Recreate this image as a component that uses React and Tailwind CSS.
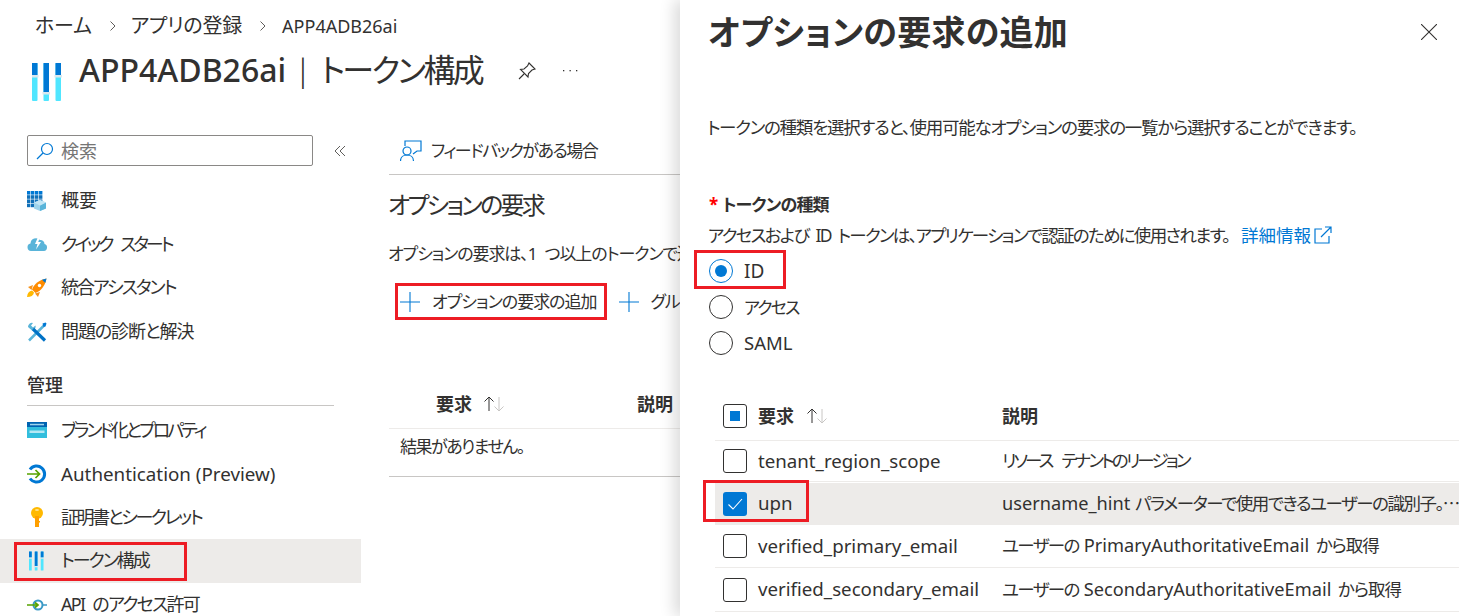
const FONT = "[font-family:'Noto_Sans','Noto_Sans_CJK_JP',sans-serif] [font-feature-settings:'palt']";

const BarsIcon = ({ className }) => (
	<svg className={className} viewBox="0 0 30 38">
		<rect x="0" y="0" width="5.5" height="38" rx="1" fill="#50e6ff" />
		<rect x="11.5" y="0" width="5.5" height="38" rx="1" fill="#50e6ff" />
		<rect x="23.5" y="0" width="5.5" height="38" rx="1" fill="#50e6ff" />
		<rect x="0" y="0" width="5.5" height="12" fill="#0078d4" />
		<rect x="11.5" y="0" width="5.5" height="29" fill="#0078d4" />
		<rect x="23.5" y="0" width="5.5" height="12" fill="#0078d4" />
		<rect x="-1" y="12" width="7.5" height="2.5" fill="#d9e8ee" />
		<rect x="10.5" y="29" width="7.5" height="2.5" fill="#d9e8ee" />
		<rect x="22.5" y="12" width="7.5" height="2.5" fill="#d9e8ee" />
	</svg>
);

const GridIcon = () => (
	<svg className="w-5 h-5" viewBox="0 0 20 20">
		{[0, 1, 2].map((r) =>
			[0, 1, 2, 3].map((c) => (
				<rect key={`${r}-${c}`} x={c * 4} y={r * 4.2} width="3.4" height="3.6" fill={r === 0 ? "#0078d4" : "#1170b8"} />
			)),
		)}
		<rect x="0" y="12.6" width="3.4" height="3.6" fill="#1170b8" />
		<rect x="4" y="12.6" width="3.4" height="3.6" fill="#1170b8" />
		<path d="M13 9l6 2.5v6L13 20l-6-2.500v-6z" fill="#9fd4ec" />
		<path d="M13 14.500l6-3v6L13 20z" fill="#59b4d9" />
		<path d="M7 11.500l6-2.500 6 2.500-6 3z" fill="#c3e6f5" />
	</svg>
);

const CloudIcon = () => (
	<svg className="w-[21px] h-5" viewBox="0 0 21 20">
		<path d="M4 17a3.800 3.800 0 0 1-.5-7.500A5.500 5.500 0 0 1 13 6a4 4 0 0 1 4.500 4A3.600 3.600 0 0 1 17 17z" fill="#59b4d9" />
		<path d="M11.500 2L8 10h2.500L9 15.500 14 8h-2.800L13.500 2z" fill="#fff" />
	</svg>
);

const RocketIcon = () => (
	<svg className="w-5 h-5" viewBox="0 0 20 20">
		<path d="M0 19c.5-4 2-6 5-6.500l2 2c-.500 3-3 4.500-7 4.500z" fill="#ffb900" />
		<path d="M1 9l5-2-1.500 5zM11 19l2-5-5 1.500z" fill="#f7941d" />
		<path d="M5 11.500C7 6 12 2 19.500.500 18 8 14 13 8.500 15z" fill="#ff8c00" />
		<path d="M15 1.700L19.500.500 18.300 5z" fill="#0078d4" />
		<circle cx="12.500" cy="7.500" r="1.700" fill="#fff" />
	</svg>
);

const ToolsIcon = () => (
	<svg className="w-5 h-5" viewBox="0 0 20 20">
		<path d="M2 18.500L17 3.500" stroke="#59b4d9" strokeWidth="2.500" />
		<path d="M15.500 1.500l3-1 1 1-1 3-2 .5z" fill="#0078d4" />
		<path d="M1 5a4 4 0 0 1 5-4L4 3.500l2 2L8.500 3.500a4 4 0 0 1-3.500 5z" fill="#59b4d9" />
		<path d="M6 7L18 18.500" stroke="#0072c6" strokeWidth="3.200" />
	</svg>
);

const WwwIcon = () => (
	<svg className="w-5 h-4" viewBox="0 0 20 16">
		<rect width="20" height="16" fill="#32bedd" />
		<rect width="20" height="5" fill="#0063b1" />
		<rect x="3" y="1.800" width="14" height="1.500" fill="#9fd4ec" />
		<path d="M2.500 8.500h15v2.500h-15z" fill="#d6f2fa" opacity=".8" />
	</svg>
);

const AuthIcon = () => (
	<svg className="w-5 h-5" viewBox="0 0 20 20" fill="none">
		<path d="M3 5.500A8 8 0 1 1 3 14.500" stroke="#0078d4" strokeWidth="3" />
		<path d="M0 10h12M8.500 6l4 4-4 4" stroke="#57a300" strokeWidth="1.700" />
	</svg>
);

const KeyIcon = () => (
	<svg className="w-5 h-5" viewBox="0 0 20 20">
		<circle cx="10" cy="6" r="6" fill="#ffb900" />
		<rect x="8" y="9" width="4" height="11" fill="#ff9f00" />
		<rect x="11" y="14" width="2" height="1.500" fill="#ff9f00" />
		<ellipse cx="10" cy="3" rx="2" ry="1" fill="#ffe28a" />
	</svg>
);

const ApiIcon = () => (
	<svg className="w-5 h-5" viewBox="0 0 20 20" fill="none">
		<circle cx="11" cy="10" r="4.500" stroke="#3999c6" strokeWidth="2" />
		<path d="M15 10h5" stroke="#3999c6" strokeWidth="1.500" />
		<path d="M0 10h11M8 7.500l3 2.500-3 2.500" stroke="#57a300" strokeWidth="1.700" />
	</svg>
);

const PlusIcon = () => (
	<svg className="w-5 h-5 shrink-0" viewBox="0 0 20 20" stroke="#0078d4" strokeWidth="1.100">
		<path d="M10 0v20M0 10h20" />
	</svg>
);

const SortArrows = () => (
	<svg className="w-[24px] h-[18px]" viewBox="0 0 24 18" fill="none" strokeWidth="1">
		<path d="M7 16V2M2.500 6.500L7 2l4.500 4.500" stroke="#323130" />
		<path d="M17 2v14M12.500 11.500L17 16l4.500-4.500" stroke="#c8c6c4" />
	</svg>
);

const Checkbox = ({ state }) => {
	if (state === "checked") {
		return (
			<span className="flex w-6 h-6 shrink-0 items-center justify-center rounded-[3px] bg-[#0078d4]">
				<svg className="w-4 h-4" viewBox="0 0 16 16" fill="none" stroke="#fff" strokeWidth="1.100">
					<path d="M1.500 8.500l4.500 4.500 9-10" />
				</svg>
			</span>
		);
	}
	return (
		<span className="flex w-6 h-6 shrink-0 items-center justify-center rounded-[3px] border border-[#323130] bg-white">
			{state === "mixed" && <span className="w-[10px] h-[10px] bg-[#0078d4]" />}
		</span>
	);
};

const Radio = ({ label, checked, className = "", labelClass }) => (
	<div className={`flex items-center h-[36px] ${className}`}>
		<span className={`flex w-6 h-6 items-center justify-center rounded-full border ${checked ? "border-[#0078d4]" : "border-[#323130]"}`}>
			{checked && <span className="w-3 h-3 rounded-full bg-[#0078d4]" />}
		</span>
		<span className={`ml-[11px] leading-none ${labelClass}`}>{label}</span>
	</div>
);

const NavItem = ({ icon, label, active, labelClass = "text-[18px]" }) => (
	<div className={`flex items-center h-[43.6px] pl-[27px] ${active ? "bg-[#edebe9]" : ""}`}>
		<span className="flex w-[34px] shrink-0 items-center">{icon}</span>
		<span className={`whitespace-nowrap ${labelClass}`}>{label}</span>
	</div>
);

const Row = ({ name, checked, className = "", children }) => (
	<div className={`flex items-center border-b border-[#edebe9] pl-2 ${className}`}>
		<Checkbox state={checked ? "checked" : "none"} />
		<span className="ml-[11px] w-[244px] shrink-0 text-[18.700px] whitespace-nowrap">{name}</span>
		<span className="overflow-hidden min-w-0 flex-1 text-[18.200px] whitespace-nowrap">{children}</span>
	</div>
);

const App = () => {
	return (
		<div className={`${FONT} relative flex w-[1459px] h-[616px] overflow-hidden bg-white text-[#323130]`}>
			<div className="flex flex-col w-[680px] shrink-0">
				<div className="flex items-center h-[52px] pl-[35px] text-[20px]">
					<span className="tracking-[-0.2px]">ホーム</span>
					<svg className="w-2 h-[10px] ml-[17px] mr-[14px]" viewBox="0 0 8 10" fill="none" stroke="#605e5c"><path d="M1.500 .5L6 5 1.500 9.500" /></svg>
					<span className="tracking-[-0.2px]">アプリの登録</span>
					<svg className="w-2 h-[10px] ml-[17px] mr-[15px]" viewBox="0 0 8 10" fill="none" stroke="#605e5c"><path d="M1.500 .5L6 5 1.500 9.500" /></svg>
					<span className="text-[18px]">APP4ADB26ai</span>
				</div>
				<div className="flex items-start h-[76px] pl-[32px]">
					<BarsIcon className="w-[30px] h-[38px] mt-[11px]" />
					<h1 className="flex ml-[17px] h-9 text-[32px] leading-9 whitespace-nowrap">
						<span className="font-medium">APP4ADB26ai</span>
						<span className="ml-[8px] font-light">|</span>
						<span className="ml-[9px] tracking-[-2.600px]">トークン構成</span>
					</h1>
					<svg className="w-5 h-5 ml-[35px] mt-[9px]" viewBox="0 0 20 20" fill="none" stroke="#323130" strokeWidth="1.100">
						<path d="M12 2l6 6-3 1-3.500 3.500-.5 3.500-7.500-7.500 3.500-.5L10.500 5zM7 13l-5 5" />
					</svg>
					<svg className="w-4 h-[2px] ml-[25px] mt-[18px]" viewBox="0 0 16 2" fill="#323130">
						<rect x="1" width="1.300" height="1.300" /><rect x="7.500" width="1.300" height="1.300" /><rect x="14" width="1.300" height="1.300" />
					</svg>
				</div>
				<div className="flex flex-1 min-h-0">
					<div className="w-[361px] shrink-0">
						<div className="flex items-center mt-[7px] pl-[27px]">
							<div className="flex items-center w-[286px] h-[31px] rounded-[2px] border border-[#8a8886] pl-2">
								<svg className="w-[18px] h-[18px]" viewBox="0 0 18 18" fill="none" stroke="#0078d4" strokeWidth="1.200">
									<circle cx="11" cy="7" r="5.500" /><path d="M7 11l-6 6" />
								</svg>
								<span className="ml-[7px] pt-px text-[18px] text-[#757575]">検索</span>
							</div>
							<svg className="w-3 h-3 ml-[21px]" viewBox="0 0 12 12" fill="none" stroke="#605e5c"><path d="M6 1L1 6l5 5M11 1L6 6l5 5" /></svg>
						</div>
						<div className="mt-[13px]">
							<NavItem icon={<GridIcon />} label="概要" />
							<NavItem icon={<CloudIcon />} label="クイック スタート" labelClass="text-[18px] tracking-[-3px] [word-spacing:7px]" />
							<NavItem icon={<RocketIcon />} label="統合アシスタント" labelClass="text-[18px] tracking-[-2px]" />
							<NavItem icon={<ToolsIcon />} label="問題の診断と解決" labelClass="text-[18px] tracking-[-1.100px]" />
						</div>
						<div className="flex items-end h-[53px] pb-[6px] ml-[27px] w-[307px] border-b border-[#c8c6c4] text-[18px] font-medium">管理</div>
						<div className="mt-[2px]">
							<NavItem icon={<WwwIcon />} label="ブランド化とプロパティ" labelClass="text-[18px] tracking-[-2.900px]" />
							<NavItem icon={<AuthIcon />} label="Authentication (Preview)" labelClass="text-[18.800px]" />
							<NavItem icon={<KeyIcon />} label="証明書とシークレット" labelClass="text-[18px] tracking-[-2.400px]" />
							<NavItem icon={<BarsIcon className="w-[15px] h-[20px] ml-[2px]" />} label="トークン構成" active labelClass="text-[18px] tracking-[-2px]" />
							<NavItem icon={<ApiIcon />} label="API のアクセス許可" labelClass="text-[18px] tracking-[-1.700px] [word-spacing:5px]" />
						</div>
					</div>
					<div className="ml-[28px] w-[291px] overflow-hidden whitespace-nowrap">
						<div className="flex items-center h-[47px] pl-[11px] border-b border-[#c8c6c4]">
							<svg className="w-[22px] h-[22px] shrink-0" viewBox="0 0 22 22" fill="none" stroke="#0078d4" strokeWidth="1.200">
								<circle cx="7" cy="11" r="4" /><path d="M.5 21c0-8 13-8 13 0M5 6V1h16v10h-4l-4 3" />
							</svg>
							<span className="ml-[9px] text-[17px] tracking-[-1.500px]">フィードバックがある場合</span>
						</div>
						<h2 className="mt-[13px] -ml-px h-[34px] text-[24px] leading-[34px] tracking-[-2.700px]">オプションの要求</h2>
						<p className="mt-[20px] -ml-px h-6 text-[17px] leading-6 tracking-[-1.100px] [word-spacing:5px]">オプションの要求は、1 つ以上のトークンで返されます。</p>
						<div className="flex items-center mt-[24px] h-6 pl-[11px] text-[17px] tracking-[-1px]">
							<PlusIcon />
							<span className="ml-3">オプションの要求の追加</span>
							<span className="ml-[22px] flex"><PlusIcon /></span>
							<span className="ml-3">グループ要求の追加</span>
						</div>
						<div className="flex items-center mt-[66px] h-[49px] border-b border-[#edebe9] pl-[47px] text-[18px] font-bold">
							<span>要求</span>
							<span className="ml-[10px]"><SortArrows /></span>
							<span className="ml-[131px]">説明</span>
						</div>
						<div className="h-[48px] border-b border-[#c8c6c4] pl-[11px] pt-[4px] text-[17px] leading-7 tracking-[-1.500px]">結果がありません。</div>
					</div>
				</div>
			</div>

			<div className="relative z-10 flex-1 min-w-0 bg-white shadow-[-6px_0_14px_rgba(0,0,0,0.14)]">
				<div className="flex items-center justify-between h-[64px] pl-[28px] pr-[22px]">
					<h2 className="text-[34px] tracking-[0.300px] font-bold whitespace-nowrap">オプションの要求の追加</h2>
					<svg className="w-4 h-4" viewBox="0 0 16 16" stroke="#323130" strokeWidth="1.100"><path d="M0 0l16 16M16 0L0 16" /></svg>
				</div>
				<p className="mt-[51px] pl-[27px] h-6 text-[17.500px] tracking-[-1.250px] leading-6 whitespace-nowrap">トークンの種類を選択すると、使用可能なオプションの要求の一覧から選択することができます。</p>
				<div className="mt-[54px] pl-[29px] h-6 text-[17px] leading-6 font-bold whitespace-nowrap">
					<span className="text-[#ff0000] mr-1">*</span>
					<span className="tracking-[-0.800px]">トークンの種類</span>
				</div>
				<div className="flex items-center mt-[6px] pl-[28px] h-6 text-[17.500px] whitespace-nowrap">
					<span className="tracking-[-1.700px] [word-spacing:4px]">アクセスおよび ID トークンは、アプリケーションで認証のために使用されます。</span>
					<span className="ml-3 text-[#0078d4]">詳細情報</span>
					<svg className="w-[18px] h-[18px] ml-[3px]" viewBox="0 0 18 18" fill="none" stroke="#0078d4" strokeWidth="1.200"><path d="M8 3H1v14h14v-7M7 11L17 1M11 1h6v6" /></svg>
				</div>
				<div className="pl-[29px]">
					<Radio label="ID" checked className="mt-[6px]" labelClass="text-[19px]" />
					<Radio label="アクセス" labelClass="text-[17px] tracking-[-1.800px]" />
					<Radio label="SAML" labelClass="text-[18.500px]" />
				</div>
				<div className="ml-[35px] mt-[31px]">
					<div className="flex items-center h-[49px] border-b border-[#edebe9] pl-2 text-[18px] font-bold">
						<Checkbox state="mixed" />
						<span className="ml-[11px]">要求</span>
						<span className="ml-[11px]"><SortArrows /></span>
						<span className="ml-[173px]">説明</span>
					</div>
					<Row className="h-[41px]" name="tenant_region_scope">
						<span className="text-[17.500px] tracking-[-2.800px] [word-spacing:8px]">リソース テナントのリージョン</span>
					</Row>
					<Row className="h-[42px] mt-px bg-[#edebe9]" checked name="upn">
						username_hint <span className="text-[17.500px] tracking-[-1.500px]">パラメーターで使用できるユーザーの識別子。⋯</span>
					</Row>
					<Row className="h-[43px]" name="verified_primary_email">
						<span className="text-[17.500px] tracking-[-1.600px] [word-spacing:2px]">ユーザーの </span>PrimaryAuthoritativeEmail<span className="text-[17.500px] tracking-[-1px] [word-spacing:3px]"> から取得</span>
					</Row>
					<Row className="h-[44px]" name="verified_secondary_email">
						<span className="text-[17.500px] tracking-[-1.600px] [word-spacing:2px]">ユーザーの </span>SecondaryAuthoritativeEmail<span className="text-[17.500px] tracking-[-1px] [word-spacing:3px]"> から取得</span>
					</Row>
				</div>
			</div>

			{/* red callouts drawn on top of the screenshot */}
			<div className="absolute z-20 left-[14px] top-[542px] w-[173px] h-[39px] border-[3px] border-[#ed1c24]" />
			<div className="absolute z-20 left-[395px] top-[283px] w-[212px] h-[37px] border-[3px] border-[#ed1c24]" />
			<div className="absolute z-20 left-[694px] top-[250px] w-[92px] h-[39px] border-[3px] border-[#ed1c24]" />
			<div className="absolute z-20 left-[703px] top-[480px] w-[106px] h-[42px] border-[3px] border-[#ed1c24]" />
		</div>
	);
};

export default App;
